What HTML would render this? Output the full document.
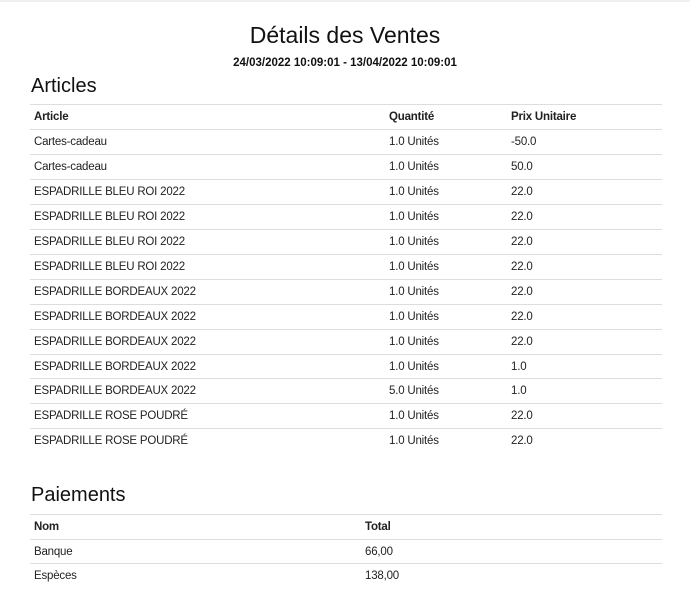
<!DOCTYPE html>
<html><head><meta charset="utf-8"><style>
*{margin:0;padding:0;box-sizing:border-box}
body{width:690px;height:614px;background:#fff;font-family:"Liberation Sans",sans-serif;color:#222;position:relative;overflow:hidden}
.top{position:absolute;left:0;top:0;width:690px;height:2px;background:#f0f0f0}
h1{position:absolute;top:22px;width:690px;text-align:center;font-weight:normal;font-size:23px;color:#111}
.date{position:absolute;top:57px;width:690px;text-align:center;font-weight:bold;font-size:11.5px;color:#111}
h2{position:absolute;left:31px;font-weight:normal;font-size:20px;color:#111}
.line{position:absolute;left:30px;width:632px;height:1px;background:#ddd}
.c{position:absolute;font-size:11.5px;white-space:nowrap;letter-spacing:-0.2px}
.b{font-weight:bold}
</style></head><body>
<div class="top"></div>
<h1>Détails des Ventes</h1>
<div class="date">24/03/2022 10:09:01 - 13/04/2022 10:09:01</div>
<h2 style="top:75px">Articles</h2>
<div id="art"></div>
<h2 style="top:484px">Paiements</h2>
<div id="pay"></div>
<script>
var rows=[["Article","Quantité","Prix Unitaire",1],["Cartes-cadeau","1.0 Unités","-50.0"],["Cartes-cadeau","1.0 Unités","50.0"],
["ESPADRILLE BLEU ROI 2022","1.0 Unités","22.0"],["ESPADRILLE BLEU ROI 2022","1.0 Unités","22.0"],["ESPADRILLE BLEU ROI 2022","1.0 Unités","22.0"],["ESPADRILLE BLEU ROI 2022","1.0 Unités","22.0"],
["ESPADRILLE BORDEAUX 2022","1.0 Unités","22.0"],["ESPADRILLE BORDEAUX 2022","1.0 Unités","22.0"],["ESPADRILLE BORDEAUX 2022","1.0 Unités","22.0"],["ESPADRILLE BORDEAUX 2022","1.0 Unités","1.0"],["ESPADRILLE BORDEAUX 2022","5.0 Unités","1.0"],
["ESPADRILLE ROSE POUDRÉ","1.0 Unités","22.0"],["ESPADRILLE ROSE POUDRÉ","1.0 Unités","22.0"]];
var h="";
rows.forEach(function(r,i){var y=104+i*24.95;h+='<div class="line" style="top:'+Math.round(y)+'px"></div>';
var ty=Math.round(y+7);var b=r[3]?' b':'';
h+='<div class="c'+b+'" style="left:34px;top:'+ty+'px">'+r[0]+'</div><div class="c'+b+'" style="left:389px;top:'+ty+'px">'+r[1]+'</div><div class="c'+b+'" style="left:511px;top:'+ty+'px">'+r[2]+'</div>';});
document.getElementById('art').innerHTML=h;
var p=[["Nom","Total",1],["Banque","66,00"],["Espèces","138,00"]];h="";
p.forEach(function(r,i){var y=514+i*24.5;h+='<div class="line" style="top:'+Math.round(y)+'px"></div>';var ty=Math.round(y+7);var b=r[2]?' b':'';
h+='<div class="c'+b+'" style="left:34px;top:'+ty+'px">'+r[0]+'</div><div class="c'+b+'" style="left:365px;top:'+ty+'px">'+r[1]+'</div>';});
document.getElementById('pay').innerHTML=h;
</script>
</body></html>
